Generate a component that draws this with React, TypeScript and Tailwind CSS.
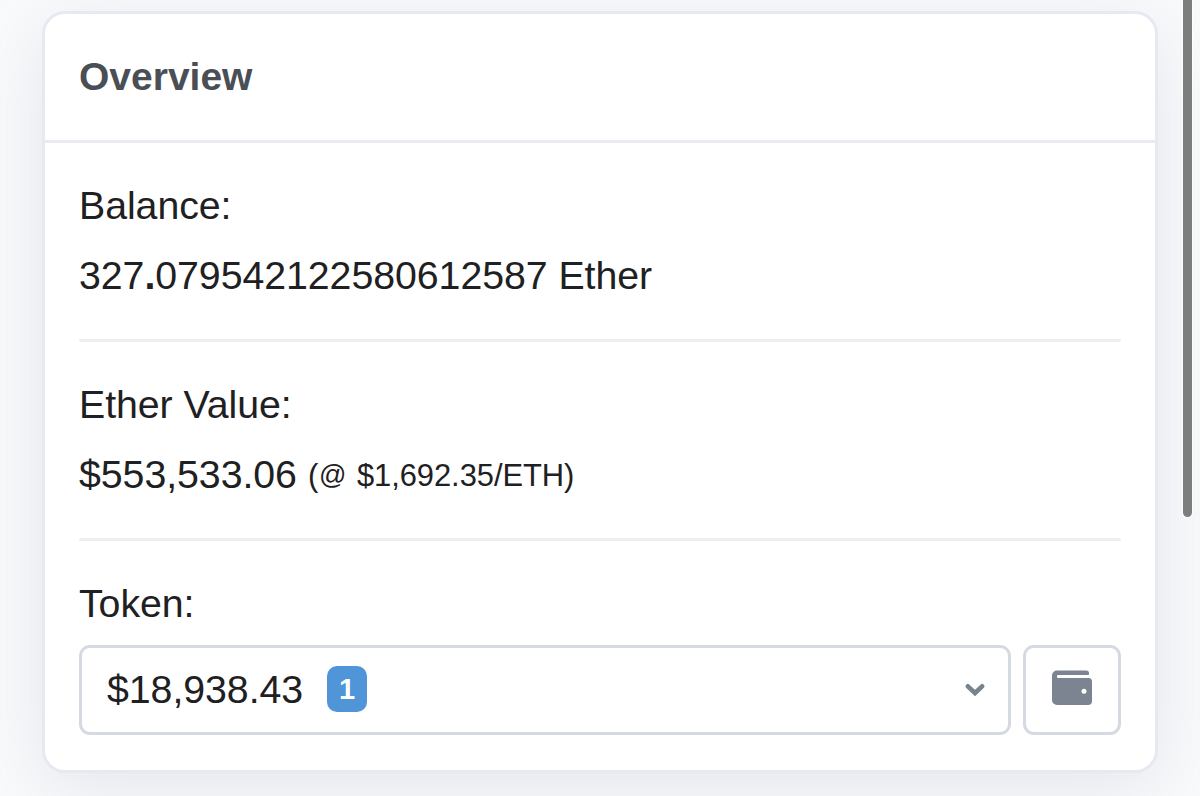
function ChevronDown() {
  return (
    <svg width="20" height="14" viewBox="0 0 20 14" fill="none">
      <path
        d="M2.9 3.3 L10 10 L17.1 3.3"
        stroke="#77838f"
        strokeWidth="4.6"
        strokeLinecap="round"
        strokeLinejoin="miter"
      />
    </svg>
  );
}

function WalletIcon() {
  return (
    <svg width="40" height="35" viewBox="0 0 40 35" fill="#7b8490">
      <path
        fillRule="evenodd"
        d="M5 .5H34.2A2.8 2.8 0 0 1 37 3.3V4.2Q37 5 36.2 5H6Q5 5 5 6V7Q5 8 6 8H36.5A3.5 3.5 0 0 1 40 11.5V31A4 4 0 0 1 36 35H5A5 5 0 0 1 0 30V5.5A5 5 0 0 1 5 .5ZM32 18.7A2.5 2.5 0 1 0 32 23.7A2.5 2.5 0 1 0 32 18.7Z"
      />
    </svg>
  );
}

function Divider() {
  return <hr className="mt-[29px] mb-[27px] h-[3px] rounded-full border-0 bg-[#eeeef0]" />;
}

export default function App() {
  return (
    <div className="relative h-[796px] w-[1200px] overflow-hidden bg-[#f9fafb] pt-[11px] pl-[42px] font-['Liberation_Sans',Arial,sans-serif] text-[39.3px] leading-[70px] tracking-[-0.06px] text-[#1e2022]">
      <div className="flex h-[762px] w-[1116px] flex-col rounded-[23px] border-3 border-[#e7e8f1] bg-white shadow-[0_16px_68px_rgba(140,145,175,0.18)]">
        {/* Card header */}
        <div className="flex h-[129px] shrink-0 items-center border-b-3 border-[#e9eaf2] px-[34px]">
          <h2 className="text-[39px] font-bold tracking-normal text-[#4a4f55]">Overview</h2>
        </div>

        {/* Card body */}
        <div className="px-[34px] pt-[27px] whitespace-nowrap">
          <div>Balance:</div>
          <div>
            327<b>.</b>079542122580612587 Ether
          </div>

          <Divider />

          <div>Ether Value:</div>
          <div className="flex h-[70px] items-center">
            <span>$553,533.06</span>
            <span className="ml-[11px] pt-[3px] text-[30.9px]">
              (<span className="mr-[2px] ml-px align-[2px] text-[27px] leading-none">@</span> $1,692.35/ETH)
            </span>
          </div>

          <Divider />

          <div>Token:</div>
          <div className="mt-[7px] flex gap-3">
            <button className="flex h-[90px] w-[932px] items-center rounded-[11px] border-3 border-[#d5dae2] pr-[23px] pb-0.5 pl-[25px]">
              <span>$18,938.43</span>
              <span className="ml-6 flex h-[46px] w-10 items-center justify-center rounded-[10px] bg-[#4f95d8] text-[29px] leading-none font-bold text-white">
                1
              </span>
              <span className="ml-auto pt-0.5">
                <ChevronDown />
              </span>
            </button>
            <button className="flex h-[90px] w-[98px] items-center justify-center rounded-[11px] border-3 border-[#d5dae2] pb-1.5">
              <WalletIcon />
            </button>
          </div>
        </div>
      </div>

      {/* Overlay scrollbar thumb */}
      <div className="absolute top-0 left-[1183px] h-[517px] w-[9px] rounded-b-full bg-[#7d7d7d] ring-1 ring-white/80" />
    </div>
  );
}
